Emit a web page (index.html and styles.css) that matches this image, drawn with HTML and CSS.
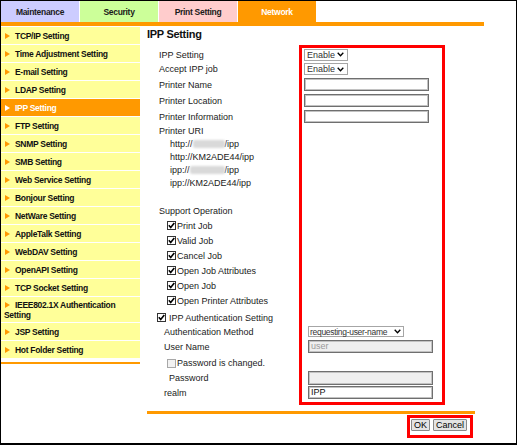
FILE: index.html
```html
<!DOCTYPE html>
<html>
<head>
<meta charset="utf-8">
<link rel="stylesheet" href="styles.css">
</head>
<body>
<div class="frame">
  <div class="tabs">
    <div class="tab t-maint">Maintenance</div>
    <div class="tab t-sec">Security</div>
    <div class="tab t-print">Print Setting</div>
    <div class="tab t-net">Network</div>
  </div>
  <div class="bar"></div>
  <div class="body">
    <nav class="side">
      <ul class="menu">
        <li class="item"><span class="arr"></span>TCP/IP Setting</li>
        <li class="item"><span class="arr"></span>Time Adjustment Setting</li>
        <li class="item"><span class="arr"></span>E-mail Setting</li>
        <li class="item"><span class="arr"></span>LDAP Setting</li>
        <li class="item active"><span class="arr"></span>IPP Setting</li>
        <li class="item"><span class="arr"></span>FTP Setting</li>
        <li class="item"><span class="arr"></span>SNMP Setting</li>
        <li class="item"><span class="arr"></span>SMB Setting</li>
        <li class="item"><span class="arr"></span>Web Service Setting</li>
        <li class="item"><span class="arr"></span>Bonjour Setting</li>
        <li class="item"><span class="arr"></span>NetWare Setting</li>
        <li class="item"><span class="arr"></span>AppleTalk Setting</li>
        <li class="item"><span class="arr"></span>WebDAV Setting</li>
        <li class="item"><span class="arr"></span>OpenAPI Setting</li>
        <li class="item"><span class="arr"></span>TCP Socket Setting</li>
        <li class="item tall"><span class="arr"></span>IEEE802.1X Authentication<br>Setting</li>
        <li class="item"><span class="arr"></span>JSP Setting</li>
        <li class="item"><span class="arr"></span>Hot Folder Setting</li>
      </ul>
      <div class="side-line"></div>
    </nav>

    <main class="main">
      <h1 class="title">IPP Setting</h1>

      <div class="row h15"><div class="lab p19">IPP Setting</div>
        <div class="ctl"><div class="sel w44">Enable<svg class="chev" width="7" height="5" viewBox="0 0 7 5"><path d="M0.7 0.8 L3.5 3.8 L6.3 0.8" fill="none" stroke="#000" stroke-width="1.3"/></svg></div></div></div>
      <div class="row h14"><div class="lab p19">Accept IPP job</div>
        <div class="ctl"><div class="sel w44">Enable<svg class="chev" width="7" height="5" viewBox="0 0 7 5"><path d="M0.7 0.8 L3.5 3.8 L6.3 0.8" fill="none" stroke="#000" stroke-width="1.3"/></svg></div></div></div>
      <div class="row h17"><div class="lab p19">Printer Name</div>
        <div class="ctl"><div class="inp"></div></div></div>
      <div class="row h15"><div class="lab p19">Printer Location</div>
        <div class="ctl"><div class="inp"></div></div></div>
      <div class="row h17"><div class="lab p19">Printer Information</div>
        <div class="ctl"><div class="inp"></div></div></div>
      <div class="row h12"><div class="lab p19">Printer URI</div></div>

      <div class="uris">
        <div class="uri">http://<span class="blur b32"></span>/ipp</div>
        <div class="uri">http://KM2ADE44/ipp</div>
        <div class="uri">ipp://<span class="blur b35"></span>/ipp</div>
        <div class="uri">ipp://KM2ADE44/ipp</div>
      </div>

      <div class="row h14 gap14"><div class="lab p19">Support Operation</div></div>
      <div class="row h15"><div class="lab p27"><svg class="cb" width="9" height="9" viewBox="0 0 9 9"><rect x="0.5" y="0.5" width="8" height="8" fill="#fff" stroke="#333"/><path d="M1.8 4.2 L3.7 6.4 L7.3 1.9" fill="none" stroke="#000" stroke-width="1.6"/></svg>Print Job</div></div>
      <div class="row h15"><div class="lab p27"><svg class="cb" width="9" height="9" viewBox="0 0 9 9"><rect x="0.5" y="0.5" width="8" height="8" fill="#fff" stroke="#333"/><path d="M1.8 4.2 L3.7 6.4 L7.3 1.9" fill="none" stroke="#000" stroke-width="1.6"/></svg>Valid Job</div></div>
      <div class="row h15"><div class="lab p27"><svg class="cb" width="9" height="9" viewBox="0 0 9 9"><rect x="0.5" y="0.5" width="8" height="8" fill="#fff" stroke="#333"/><path d="M1.8 4.2 L3.7 6.4 L7.3 1.9" fill="none" stroke="#000" stroke-width="1.6"/></svg>Cancel Job</div></div>
      <div class="row h15"><div class="lab p27"><svg class="cb" width="9" height="9" viewBox="0 0 9 9"><rect x="0.5" y="0.5" width="8" height="8" fill="#fff" stroke="#333"/><path d="M1.8 4.2 L3.7 6.4 L7.3 1.9" fill="none" stroke="#000" stroke-width="1.6"/></svg>Open Job Attributes</div></div>
      <div class="row h15"><div class="lab p27"><svg class="cb" width="9" height="9" viewBox="0 0 9 9"><rect x="0.5" y="0.5" width="8" height="8" fill="#fff" stroke="#333"/><path d="M1.8 4.2 L3.7 6.4 L7.3 1.9" fill="none" stroke="#000" stroke-width="1.6"/></svg>Open Job</div></div>
      <div class="row h15"><div class="lab p27"><svg class="cb" width="9" height="9" viewBox="0 0 9 9"><rect x="0.5" y="0.5" width="8" height="8" fill="#fff" stroke="#333"/><path d="M1.8 4.2 L3.7 6.4 L7.3 1.9" fill="none" stroke="#000" stroke-width="1.6"/></svg>Open Printer Attributes</div></div>

      <div class="row h15 gap2"><div class="lab p17"><svg class="cb cb-wide" width="9" height="9" viewBox="0 0 9 9"><rect x="0.5" y="0.5" width="8" height="8" fill="#fff" stroke="#333"/><path d="M1.8 4.2 L3.7 6.4 L7.3 1.9" fill="none" stroke="#000" stroke-width="1.6"/></svg>IPP Authentication Setting</div></div>
      <div class="row h13"><div class="lab lab-wide p24">Authentication Method</div>
        <div class="ctl"><div class="sel w96">requesting-user-name<svg class="chev" width="7" height="5" viewBox="0 0 7 5"><path d="M0.7 0.8 L3.5 3.8 L6.3 0.8" fill="none" stroke="#000" stroke-width="1.3"/></svg></div></div></div>
      <div class="row h17"><div class="lab lab-wide p24">User Name</div>
        <div class="ctl"><div class="inp dis">user</div></div></div>
      <div class="row h16"><div class="lab lab-wide p27"><svg class="cb" width="9" height="9" viewBox="0 0 9 9"><rect x="0.5" y="0.5" width="8" height="8" fill="#f2f2f2" stroke="#a8a8a8"/></svg>Password is changed.</div></div>
      <div class="row h13"><div class="lab lab-wide p29">Password</div>
        <div class="ctl"><div class="inp dis tall"></div></div></div>
      <div class="row h17"><div class="lab lab-wide p24">realm</div>
        <div class="ctl"><div class="inp">IPP</div></div></div>

      <div class="foot-line"></div>
      <div class="buttons">
        <div class="btn">OK</div>
        <div class="btn">Cancel</div>
      </div>
    </main>
  </div>

  <div class="redbox box-main"></div>
  <div class="redbox box-btn"></div>
</div>
</body>
</html>
```

FILE: styles.css
```css
* { box-sizing: border-box; }

html, body {
  margin: 0;
  padding: 0;
  background: #fff;
}

.frame {
  position: relative;
  width: 517px;
  height: 445px;
  border: 1px solid #000;
  border-bottom-width: 2px;
  overflow: hidden;
  font-family: "Liberation Sans", Arial, sans-serif;
  font-size: 9px;
  color: #111;
}

/* tabs */
.tabs {
  display: flex;
  gap: 1px;
  height: 21px;
}
.tab {
  width: 78px;
  display: flex;
  align-items: center;
  justify-content: center;
  font-weight: bold;
  font-size: 8.5px;
  letter-spacing: -0.3px;
  color: #1a1a1a;
}
.t-maint { background: #ccccff; }
.t-sec { background: #ccff99; }
.t-print { background: #ffcccc; }
.t-net { background: #ff9900; color: #fff; }

.bar {
  width: 483px;
  height: 4px;
  background: #ff9900;
}

.body {
  display: flex;
  align-items: flex-start;
}

/* sidebar */
.side {
  width: 139px;
  flex: none;
  padding-top: 1px;
}
.menu {
  list-style: none;
  margin: 0;
  padding: 0;
  display: flex;
  flex-direction: column;
  gap: 1px;
}
.item {
  height: 17px;
  background: #ffff99;
  padding-left: 3px;
  display: flex;
  align-items: center;
  font-weight: bold;
  font-size: 8.5px;
  letter-spacing: -0.3px;
  color: #111;
  white-space: nowrap;
}
.item.tall {
  height: 25px;
  display: block;
  line-height: 10px;
  padding-top: 2.5px;
}
.item.active {
  background: #ff9900;
  color: #fff;
}
.arr {
  display: inline-block;
  width: 0;
  height: 0;
  border-left: 5px solid #ff9900;
  border-top: 3px solid transparent;
  border-bottom: 3px solid transparent;
  margin-left: 1px;
  margin-right: 5px;
  vertical-align: 0;
}
.item.active .arr { border-left-color: #fff; }
.side-line {
  margin-top: 4px;
  height: 2px;
  background: #ff9900;
}

/* main */
.main {
  flex: 1;
  padding-top: 1px;
}
.title {
  margin: 0 0 5px 0;
  padding-left: 7px;
  height: 15px;
  line-height: 15px;
  font-size: 11px;
  font-weight: bold;
  letter-spacing: -0.3px;
  color: #111;
}
.row {
  display: flex;
  align-items: center;
}
.h12 { height: 12px; }
.h13 { height: 13px; }
.h14 { height: 14px; }
.h15 { height: 15px; }
.h16 { height: 16px; }
.h17 { height: 17px; }
.gap14 { margin-top: 14px; }
.gap2 { margin-top: 2px; }

.lab {
  width: 164px;
  flex: none;
  display: flex;
  align-items: center;
  white-space: nowrap;
  color: #1a1a1a;
}
.lab-wide { width: 168px; }
.p17 { padding-left: 17px; }
.p19 { padding-left: 19px; }
.p24 { padding-left: 24px; }
.p27 { padding-left: 27px; }
.p29 { padding-left: 29px; }

.ctl {
  display: flex;
  align-items: center;
}

.sel {
  height: 12px;
  border: 1px solid #a6a6a6;
  background: #fff;
  display: flex;
  align-items: center;
  justify-content: space-between;
  padding: 0 3px 0 2px;
  color: #333;
  font-size: 9px;
  white-space: nowrap;
}
.w44 { width: 44px; }
.w96 {
  width: 96px;
  height: 11px;
  padding-left: 1px;
  padding-right: 2px;
  font-size: 8.5px;
  letter-spacing: -0.3px;
}
.chev { flex: none; }

.inp {
  width: 125px;
  height: 13px;
  border: 1px solid #6f6f6f;
  box-shadow: inset 0 0 0 1px #c2c2c2;
  background: #fff;
  padding-left: 2px;
  font-size: 9px;
  line-height: 11px;
  color: #111;
}
.inp.dis {
  background: #efefef;
  color: #9a9a9a;
}
.inp.tall { height: 14px; }

.cb {
  flex: none;
  margin-right: 1px;
}
.cb-wide { margin-right: 3px; }

.uris {
  margin-top: 1px;
  padding-left: 30px;
}
.uri {
  height: 13px;
  line-height: 13px;
  white-space: nowrap;
  color: #1a1a1a;
}
.blur {
  display: inline-block;
  height: 8px;
  vertical-align: -1px;
  background: #d9d9d9;
  border-radius: 2px;
  filter: blur(1.2px);
}
.b32 { width: 32px; }
.b35 { width: 35px; }

.foot-line {
  margin-top: 10px;
  margin-left: 7px;
  width: 328px;
  height: 3px;
  background: #ff9900;
}
.buttons {
  margin-top: 5px;
  margin-left: 7px;
  width: 320px;
  display: flex;
  justify-content: flex-end;
  gap: 3px;
}
.btn {
  height: 12px;
  padding: 0 2px;
  border: 1px solid #8a8a8a;
  border-radius: 1px;
  background: #e4e4e4;
  font-size: 9px;
  line-height: 10px;
  color: #000;
}

/* annotations */
.redbox {
  position: absolute;
  border: 3px solid #ff0000;
}
.box-main {
  left: 298px;
  top: 44px;
  width: 146px;
  height: 360px;
}
.box-btn {
  left: 406px;
  top: 414px;
  width: 66px;
  height: 23px;
}
```
